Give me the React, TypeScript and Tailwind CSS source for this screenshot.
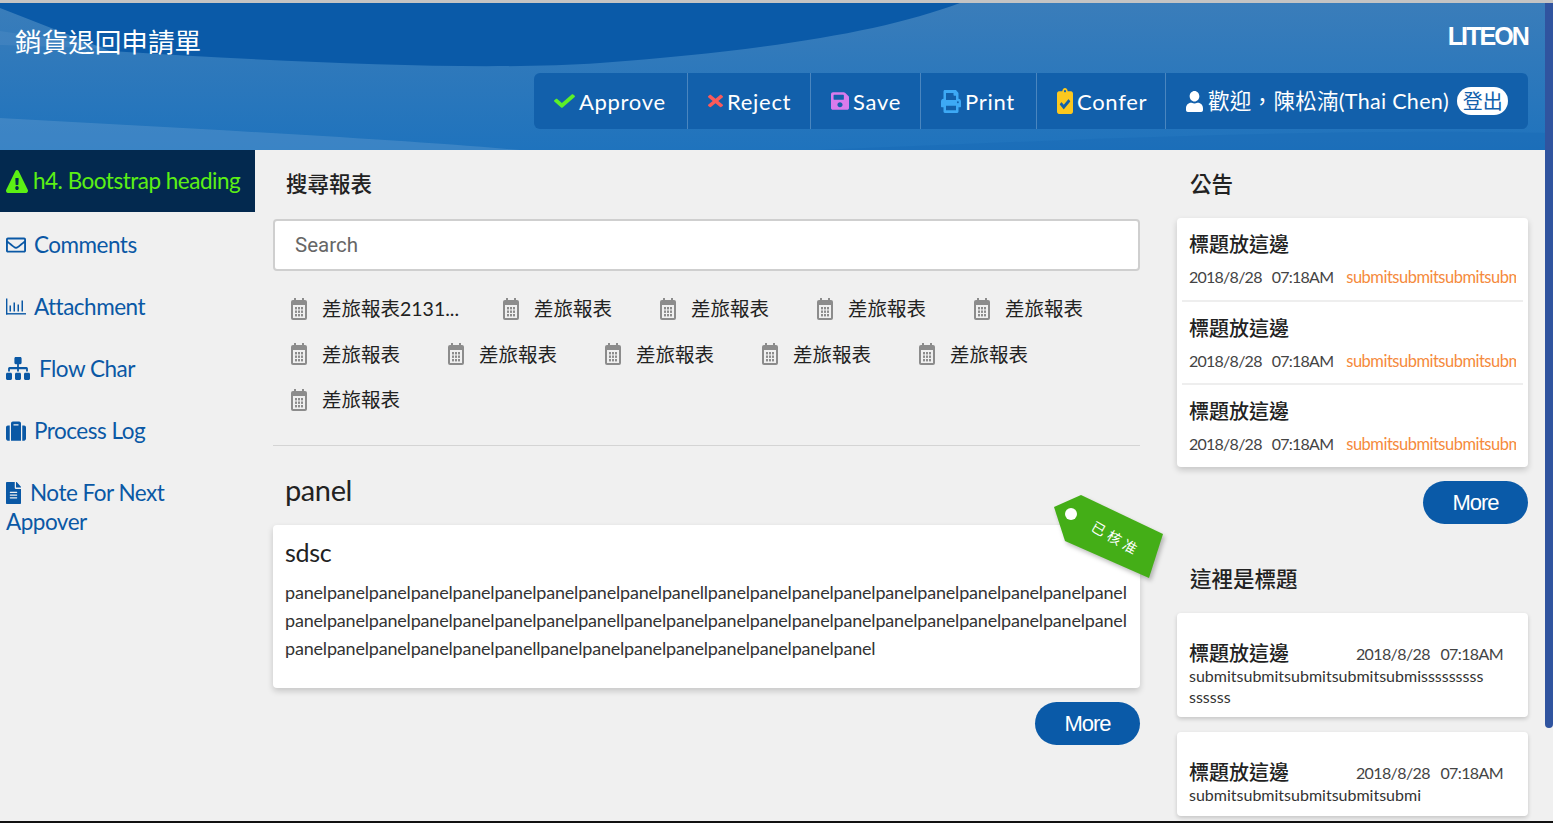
import {
	FaCheck,
	FaClipboardCheck,
	FaExclamationTriangle,
	FaFileAlt,
	FaPrint,
	FaRegEnvelope,
	FaSave,
	FaSitemap,
	FaSuitcase,
	FaTimes,
	FaUser
} from 'react-icons/fa';

const panelLine1 =
	'panelpanelpanelpanelpanelpanelpanelpanelpanelpanellpanelpanelpanelpanelpanelpanelpanelpanelpanelpanel';
const panelLine2 =
	'panelpanelpanelpanelpanelpanelpanelpanellpanelpanelpanelpanelpanelpanelpanelpanelpanelpanelpanelpanel';
const panelLine3 = 'panelpanelpanelpanelpanelpanellpanelpanelpanelpanelpanelpanelpanelpanel';

export default function App() {
	return (
		<div className="relative h-screen w-full overflow-hidden bg-[#f0f0f0] font-['Lato','Noto_Sans_CJK_TC',sans-serif] border-t-[3px] border-[#c4c4c4] border-b-2 border-b-[#111]">
			<Header />
			<div className="flex">
				<LeftPanel />
				<Center />
				<RightPanel />
			</div>
			<div className="absolute right-0 top-0 h-[725px] w-2 rounded-b bg-[#30549f]" />
		</div>
	);
}

function HeaderWaves() {
	return (
		<svg
			className="absolute inset-0 h-full w-full"
			viewBox="0 0 1553 147"
			preserveAspectRatio="none"
		>
			<defs>
				<linearGradient id="lower" x1="0" y1="0" x2="0" y2="1">
					<stop offset="0" stopColor="#3a7dba" />
					<stop offset="1" stopColor="#1f73bd" />
				</linearGradient>
			</defs>
			<rect width="1553" height="147" fill="#0a5aa8" />
			<path
				d="M0 5 L110 48 C 300 60 480 68 600 60 C 760 48 880 30 960 0 L1553 0 L1553 147 L0 147 Z"
				fill="url(#lower)"
			/>
			<path d="M0 28 L120 46 L0 42 Z" fill="#ffffff" opacity="0.06" />
			<path d="M0 115 C 180 125 380 135 520 147 L0 147 Z" fill="#ffffff" opacity="0.12" />
			<path d="M820 147 C 1100 135 1350 125 1553 130 L1553 147 Z" fill="#0a5aa8" opacity="0.15" />
		</svg>
	);
}

function ToolbarCell({
	icon,
	label,
	className
}: {
	icon: React.ReactNode;
	label: string;
	className: string;
}) {
	return (
		<div className={`flex h-full items-center gap-[4px] border-r border-[#4a86bf] pl-5 ${className}`}>
			{icon}
			<span className="tracking-[0.7px]">{label}</span>
		</div>
	);
}

function Header() {
	return (
		<div className="relative h-[147px] text-white">
			<HeaderWaves />
			<div className="relative flex flex-col h-full">
				<div className="flex justify-between pl-[15px] pr-[25px]">
					<h1 className="mt-[17px] text-[26.6px] leading-[44px]">銷貨退回申請單</h1>
					<span className="mt-[18px] font-['Liberation_Sans',sans-serif] text-[25px] font-bold leading-[30px] tracking-[-1.9px]">
						LITEON
					</span>
				</div>
				<div className="mt-[9px] mr-[25px] flex h-[56px] w-[994px] self-end items-center rounded-md bg-[#1260ab] text-[22px]">
					<ToolbarCell className="w-[154px]" label="Approve" icon={<FaCheck preserveAspectRatio="none" className="h-[18px] w-[21px] text-[#5cf028]" />} />
					<ToolbarCell className="w-[123px]" label="Reject" icon={<FaTimes preserveAspectRatio="none" className="h-[18px] w-[15px] text-[#fb5a5a]" />} />
					<ToolbarCell className="w-[110px]" label="Save" icon={<FaSave preserveAspectRatio="none" className="h-[20px] w-[18px] text-[#d97bec]" />} />
					<ToolbarCell className="w-[116px]" label="Print" icon={<FaPrint preserveAspectRatio="none" className="h-[23px] w-[20px] text-[#3da9f5]" />} />
					<ToolbarCell className="w-[129px]" label="Confer" icon={<FaClipboardCheck preserveAspectRatio="none" className="h-[26px] w-[16px] text-[#fcc81e]" />} />
					<div className="flex h-full flex-1 items-center pl-5">
						<FaUser preserveAspectRatio="none" className="mr-[5px] h-[21px] w-[17px]" />
						<span className="tracking-[0.3px] text-[21.5px]">歡迎，陳松湳(Thai Chen)</span>
						<span className="ml-2 flex h-[28px] w-[51px] items-center justify-center rounded-full bg-white text-[20px] text-[#1260ab]">
							登出
						</span>
					</div>
				</div>
			</div>
		</div>
	);
}

function BarChartIcon() {
	return (
		<svg viewBox="0 0 20 16" className="h-[17px] w-5 fill-[#0a58a5]">
			<rect x="0" y="0" width="1.4" height="16" />
			<rect x="0" y="14.6" width="20" height="1.4" />
			<rect x="3.5" y="7" width="1.5" height="6" />
			<rect x="7.5" y="4" width="1.5" height="9" />
			<rect x="11.5" y="6" width="1.5" height="7" />
			<rect x="15.5" y="2" width="1.5" height="11" />
		</svg>
	);
}

function LeftPanel() {
	const itemClass = 'mt-[33px] flex items-center h-[29px] text-[22.5px] leading-[29px] tracking-[-0.5px] first:mt-[18px]';
	return (
		<div className="w-[255px] shrink-0 text-[#0a58a5]">
			<div className="flex h-[62px] items-center gap-[5px] whitespace-nowrap bg-[#03294f] pl-[6px] text-[22.5px] text-[#5cf014]">
				<FaExclamationTriangle preserveAspectRatio="none" className="h-[23px] w-[22px]" />
				<span className="tracking-[-0.5px]">h4. Bootstrap heading</span>
			</div>
			<div className="pl-[6px] pt-0">
				<div className={itemClass}>
					<FaRegEnvelope preserveAspectRatio="none" className="mr-2 h-[20px] w-[20px]" />
					Comments
				</div>
				<div className={itemClass}>
					<span className="mr-2"><BarChartIcon /></span>
					Attachment
				</div>
				<div className={itemClass}>
					<FaSitemap preserveAspectRatio="none" className="mr-[9px] h-[23px] w-[24px]" />
					Flow Char
				</div>
				<div className={itemClass}>
					<FaSuitcase preserveAspectRatio="none" className="mr-2 h-[22px] w-[20px]" />
					Process Log
				</div>
				<div className="mt-[33px] text-[22.5px] leading-[29px] tracking-[-0.5px]">
					<FaFileAlt preserveAspectRatio="none" className="mr-[9px] inline-block h-[22px] w-[15px] align-[-3px]" />
					Note For Next
					<br />
					Appover
				</div>
			</div>
		</div>
	);
}

function CalendarIcon() {
	return (
		<svg viewBox="0 0 16 22" className="h-[22px] w-4 shrink-0">
			<rect x="0" y="2" width="16" height="20" rx="2" fill="#8c8c8c" />
			<rect x="3" y="0" width="2" height="4" fill="#8c8c8c" />
			<rect x="11" y="0" width="2" height="4" fill="#8c8c8c" />
			<rect x="2" y="7" width="12" height="13" fill="#f0f0f0" />
			{[9, 12.5, 16].map(y =>
				[4, 7, 10].map(x => (
					<rect key={`${x}-${y}`} x={x} y={y} width="2" height="2.4" fill="#8c8c8c" />
				))
			)}
		</svg>
	);
}

function ReportTag({ label, wide }: { label: string; wide?: boolean }) {
	return (
		<div className={`flex h-[45.5px] items-center gap-[15px] ${wide ? 'w-[212px]' : 'w-[157px]'}`}>
			<CalendarIcon />
			<span className="text-[19.5px] text-[#222] whitespace-nowrap">{label}</span>
		</div>
	);
}

function MoreButton() {
	return (
		<div className="flex h-[43px] w-[105px] items-center justify-center rounded-full bg-[#0a5aa8] font-['Liberation_Sans',sans-serif] text-[22px] tracking-[-1px] text-white">
			More
		</div>
	);
}

function Center() {
	return (
		<div className="ml-[18px] w-[867px] shrink-0">
			<h2 className="pl-[13px] pt-[14px] text-[21.5px] font-medium leading-[40px] text-[#222]">搜尋報表</h2>
			<div className="mt-[15px] flex h-[52px] items-center rounded border-2 border-[#cfcfcf] bg-white pl-5 font-['Roboto',sans-serif] text-[20.5px] text-[#666]">
				Search
			</div>
			<div className="mt-[15px] flex flex-wrap border-b border-[#d4d4d4] pb-[22px] pl-[18px]">
				<ReportTag label="差旅報表2131..." wide />
				<ReportTag label="差旅報表" />
				<ReportTag label="差旅報表" />
				<ReportTag label="差旅報表" />
				<ReportTag label="差旅報表" />
				<div className="w-full" />
				<ReportTag label="差旅報表" />
				<ReportTag label="差旅報表" />
				<ReportTag label="差旅報表" />
				<ReportTag label="差旅報表" />
				<ReportTag label="差旅報表" />
				<div className="w-full" />
				<ReportTag label="差旅報表" />
			</div>
			<h3 className="pl-3 pt-[22px] text-[29px] leading-[44px] tracking-[-0.4px] text-[#222]">panel</h3>
			<div className="relative mt-[13px] h-[163px] rounded bg-white px-3 pt-[8px] shadow-[0_3px_6px_rgba(0,0,0,0.18)]">
				<div className="text-[25px] leading-[38px] tracking-[-0.3px] text-[#222]">sdsc</div>
				<div className="mt-[7px] whitespace-nowrap text-[18px] leading-[28.4px] tracking-[-0.19px] text-[#333]">
					<div>{panelLine1}</div>
					<div>{panelLine2}</div>
					<div>{panelLine3}</div>
				</div>
				<div className="absolute left-[780px] top-[-31px] h-[85px] w-[112px]">
					<svg viewBox="0 0 112 85" className="h-full w-full drop-shadow-[2px_3px_2px_rgba(0,0,0,0.25)]">
						<path d="M1 13 L28 1 L110 40 L96 84 L12 47 Z" fill="#44ae17" />
						<circle cx="18" cy="20" r="6" fill="#fff" />
					</svg>
					<span className="absolute left-[36px] top-[36px] rotate-[30deg] whitespace-nowrap text-[14px] leading-[18px] tracking-[4px] text-white">
						已核准
					</span>
				</div>
			</div>
			<div className="mt-[14px] flex justify-end">
				<MoreButton />
			</div>
		</div>
	);
}

function NoticeItem({ className }: { className: string }) {
	return (
		<div className={`mx-[5px] px-[7px] ${className}`}>
			<div className="pt-[10px] text-[20px] font-medium leading-[32px] text-[#222]">標題放這邊</div>
			<div className="mt-[2px] flex whitespace-nowrap text-[16px] leading-[30px]">
				<span className="tracking-[-0.75px] text-[#444]">2018/8/28&nbsp;&nbsp;&nbsp;07:18AM</span>
				<span className="ml-[13px] w-[170px] overflow-hidden text-[16.5px] tracking-[-0.5px] text-[#f58a3c]">submitsubmitsubmitsubmit</span>
			</div>
		</div>
	);
}

function MessageCard({ text, className }: { text: string; className: string }) {
	return (
		<div className={`rounded bg-white px-3 shadow-[0_2px_4px_rgba(0,0,0,0.18)] ${className}`}>
			<div className="flex items-end justify-between pr-[13px] pt-[26px]">
				<span className="text-[20px] font-medium leading-[28px] text-[#222]">標題放這邊</span>
				<span className="whitespace-pre text-[16px] leading-[26px] tracking-[-0.6px] text-[#444]">2018/8/28   07:18AM</span>
			</div>
			<div className="-mt-[2px] break-all pr-[28px] text-[16px] leading-[21px] text-[#333]">{text}</div>
		</div>
	);
}

function RightPanel() {
	return (
		<div className="ml-[37px] w-[351px] shrink-0">
			<h2 className="pl-[13px] pt-[14px] text-[21.5px] font-medium leading-[40px] text-[#222]">公告</h2>
			<div className="mt-[14px] h-[249px] rounded bg-white shadow-[0_3px_6px_rgba(0,0,0,0.18)]">
				<NoticeItem className="h-[84px] border-b-2 border-[#eeeeee]" />
				<NoticeItem className="h-[83px] border-b-2 border-[#eeeeee]" />
				<NoticeItem className="h-[82px]" />
			</div>
			<div className="mt-[14px] flex justify-end">
				<MoreButton />
			</div>
			<h2 className="pl-[13px] pt-[35px] text-[21.5px] font-medium leading-[40px] text-[#222]">這裡是標題</h2>
			<MessageCard className="mt-[14px] h-[104px]" text="submitsubmitsubmitsubmitsubmisssssssssssssss" />
			<MessageCard className="mt-[15px] h-[84px]" text="submitsubmitsubmitsubmitsubmi" />
		</div>
	);
}
